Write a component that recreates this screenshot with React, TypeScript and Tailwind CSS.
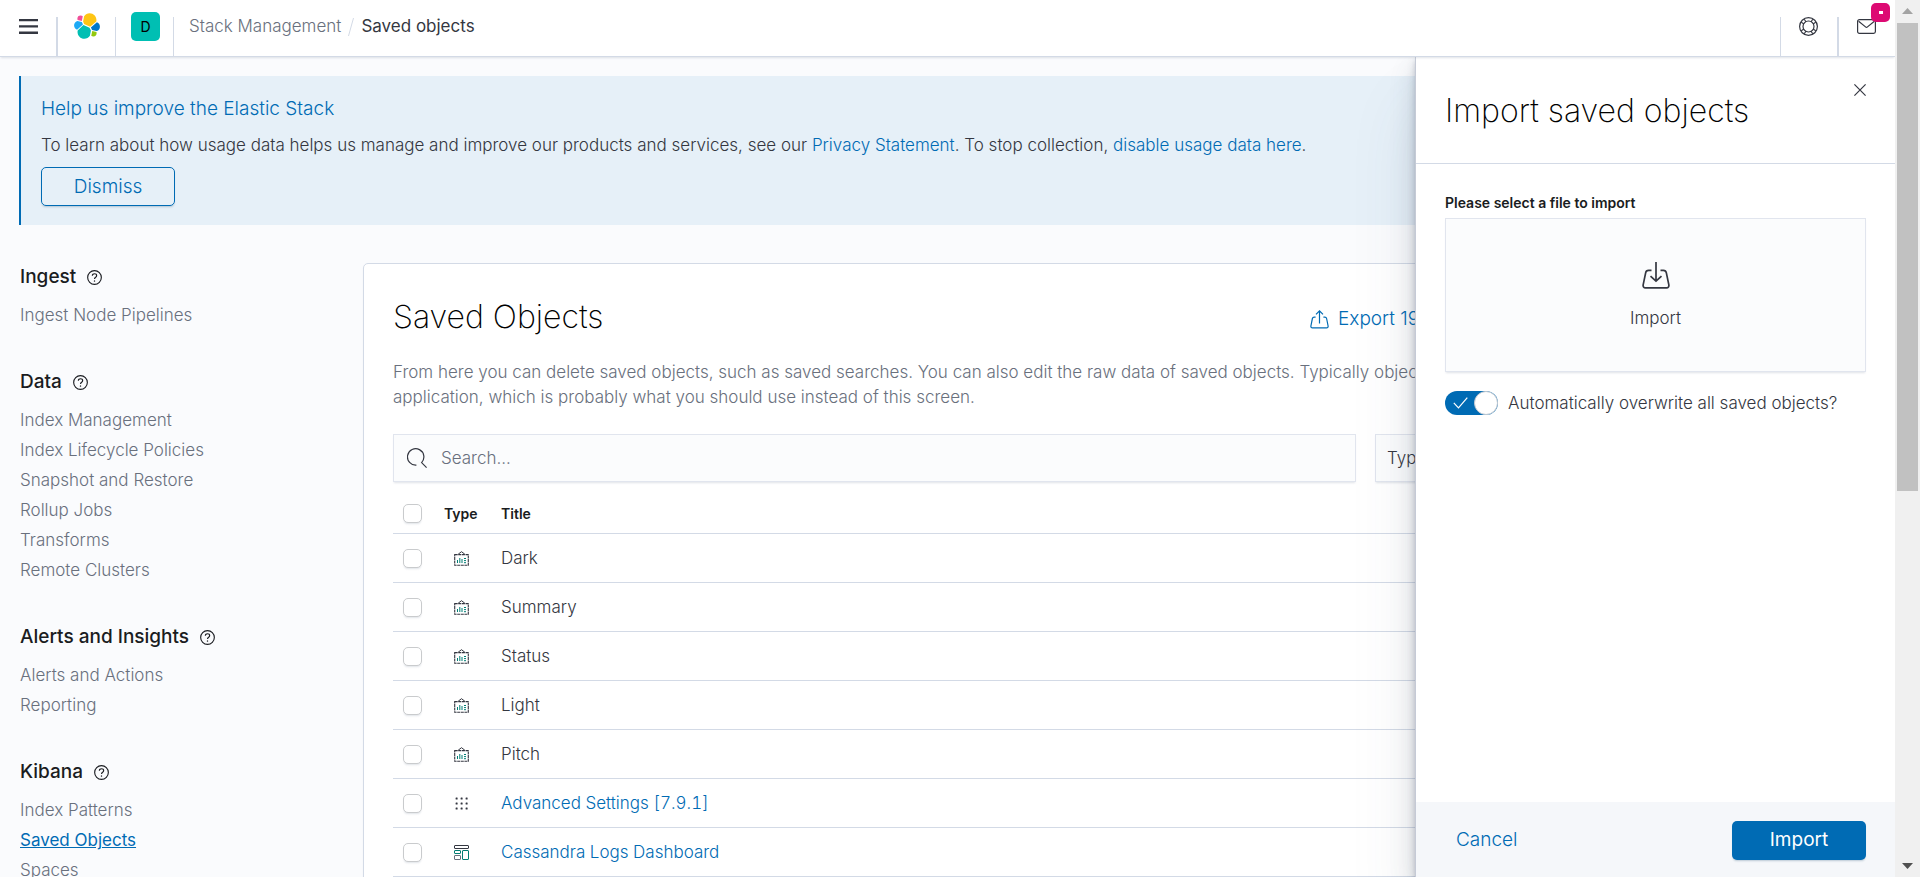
import React, { useState } from "react";

const dark = "#343741";

function ElasticLogo() {
  return (
    <svg viewBox="0 0 32 32" className="size-7" aria-hidden="true">
      <path fill="#FEC514" d="M12.58 13.787l7.002 3.211 7.066-6.213a7.849 7.849 0 00.152-1.557c0-4.287-3.464-7.775-7.722-7.775a7.7 7.7 0 00-6.368 3.39l-1.175 6.132 1.195 2.812z" />
      <path fill="#00BFB3" d="M5.333 21.228A8.013 8.013 0 005.18 22.8c0 4.301 3.473 7.8 7.741 7.8a7.72 7.72 0 006.4-3.408l1.165-6.106-1.556-2.996-7.03-3.223-6.567 6.361z" />
      <path fill="#F04E98" d="M5.288 9.067l4.8 1.141 1.052-5.484a3.814 3.814 0 00-2.309-.778 3.84 3.84 0 00-3.824 3.85c0 .442.077.874.281 1.271z" />
      <path fill="#1BA9F5" d="M4.872 10.214C2.727 10.928 1.229 13.004 1.229 15.285c0 2.222 1.365 4.203 3.414 4.988l6.734-6.128-1.236-2.66-5.269-1.271z" />
      <path fill="#93C90E" d="M20.873 27.191a3.804 3.804 0 002.3.779 3.84 3.84 0 003.823-3.85c0-.452-.077-.884-.22-1.286l-4.796-1.13-1.107 5.487z" />
      <path fill="#0077CC" d="M21.848 20.563l5.28 1.243c2.145-.714 3.643-2.79 3.643-5.071a5.354 5.354 0 00-3.422-4.991l-6.905 6.088 1.404 2.731z" />
    </svg>
  );
}

function LifebuoyIcon() {
  return (
    <svg viewBox="0 0 19 19" className="size-[19px]" fill="none" stroke={dark} aria-hidden="true">
      <circle cx="9.5" cy="9.5" r="8.900" strokeWidth="1.200" />
      <circle cx="9.5" cy="9.5" r="5.500" strokeWidth="1.200" />
      <path d="M5.300 2.200l1.700 2.800M2.200 5.300l2.800 1.700M13.700 2.200l-1.700 2.800M16.800 5.300l-2.800 1.700M5.300 16.800l1.700-2.800M2.200 13.700l2.800-1.700M13.700 16.800l-1.700-2.800M16.800 13.700l-2.800-1.700" strokeWidth="1.200" />
    </svg>
  );
}

function MailIcon() {
  return (
    <svg viewBox="0 0 19 15" className="h-[15px] w-[19px]" fill="none" stroke={dark} aria-hidden="true">
      <rect x="0.6" y="0.6" width="17.8" height="13.8" rx="1.8" strokeWidth="1.2" />
      <path d="M1.600 2.200l6.900 5.700a1.500 1.500 0 002 0l6.900-5.700" strokeWidth="1.2" />
    </svg>
  );
}

function HelpIcon() {
  return (
    <svg viewBox="0 0 16 16" className="size-[15px]" fill="none" stroke="#1a1c21" aria-hidden="true">
      <circle cx="8" cy="8" r="7.3" strokeWidth="1.2" />
      <path d="M5.7 6.2c0-1.4 1-2.2 2.3-2.2s2.3.8 2.3 2c0 1.7-2.3 1.7-2.3 3.6" strokeWidth="1.2" />
      <circle cx="8" cy="11.8" r="0.5" fill="#1a1c21" strokeWidth="0.6" />
    </svg>
  );
}

function SearchIcon() {
  return (
    <svg viewBox="0 0 20 20" className="size-5" fill="none" stroke={dark} strokeWidth="1.2" aria-hidden="true">
      <path d="M9.4 17.1A8.2 8.2 0 1 1 14.6 14.6L19.6 19.6" />
    </svg>
  );
}

function ExportIcon() {
  return (
    <svg viewBox="0 0 19 19" className="size-[19px]" fill="none" stroke="#006bb4" strokeWidth="1.2" aria-hidden="true">
      <path d="M5.6 7.1H4.2c-.9 0-1.6.5-1.8 1.4L.9 16c-.2 1.1.5 1.9 1.5 1.9h14.2c1 0 1.7-.8 1.5-1.9l-1.5-7.5c-.2-.9-.9-1.4-1.8-1.4h-1.4" />
      <path d="M9.5 13.5V.9M6 4.4L9.5.9 13 4.4" />
    </svg>
  );
}

function ImportIcon() {
  return (
    <svg viewBox="0 0 28 27" className="h-[27px] w-7" fill="none" stroke={dark} strokeWidth="1.7" aria-hidden="true">
      <path d="M9.500 8.300H6.600c-1.600 0-2.700.8-2.900 2.300L1.200 22.600c-.4 1.900.6 3.200 2.300 3.200h21c1.700 0 2.700-1.300 2.300-3.200l-2.500-12c-.3-1.500-1.300-2.300-2.900-2.300h-2.900" />
      <path d="M14 0v19.300M8.500 14.200l5.500 5 5.500-5" />
    </svg>
  );
}

function CanvasIcon() {
  return (
    <svg viewBox="0 0 15 15" className="mx-auto size-[15px]" fill="none" aria-hidden="true">
      <path d="M.7 3.600h13.600v10.700H.7z" stroke="#343741" strokeWidth="1.100" strokeDasharray="3 .6" />
      <path d="M4.200 3.200L7.500.700l3.300 2.500" stroke="#343741" />
      <path d="M3.500 12V9M5.800 12V7M8 12V8M10 7.500h2M10 9.600h2M10 11.700h2" stroke="#017d73" />
    </svg>
  );
}

function GridIcon() {
  return (
    <svg viewBox="0 0 15 15" className="mx-auto size-[15px]" fill="#343741" aria-hidden="true">
      {[2, 7, 12].map((y) => [2, 7, 12].map((x) => <rect key={`${x}-${y}`} x={x - 0.4} y={y - 0.4} width="2" height="2" rx="0.500" />))}
    </svg>
  );
}

function DashboardIcon() {
  return (
    <svg viewBox="0 0 15 15" className="mx-auto size-[15px]" fill="none" aria-hidden="true">
      <rect x="0.500" y="0.500" width="14" height="3" rx="0.500" stroke="#343741" />
      <rect x="8.500" y="5.500" width="6" height="9" rx="0.500" stroke="#017d73" />
      <rect x="0.500" y="5.500" width="6" height="3" rx="0.500" stroke="#017d73" />
      <rect x="0.500" y="10.500" width="6" height="4" rx="0.500" stroke="#69707d" />
    </svg>
  );
}

const nav = [
  { title: "Ingest", items: ["Ingest Node Pipelines"] },
  {
    title: "Data",
    items: ["Index Management", "Index Lifecycle Policies", "Snapshot and Restore", "Rollup Jobs", "Transforms", "Remote Clusters"],
  },
  { title: "Alerts and Insights", items: ["Alerts and Actions", "Reporting"] },
  { title: "Kibana", items: ["Index Patterns", "Saved Objects", "Spaces"] },
];

const rows = [
  { title: "Dark", kind: "canvas" },
  { title: "Summary", kind: "canvas" },
  { title: "Status", kind: "canvas" },
  { title: "Light", kind: "canvas" },
  { title: "Pitch", kind: "canvas" },
  { title: "Advanced Settings [7.9.1]", kind: "config", link: true },
  { title: "Cassandra Logs Dashboard", kind: "dashboard", link: true },
];

function TypeIcon({ kind }: { kind: string }) {
  if (kind === "canvas") return <CanvasIcon />;
  if (kind === "config") return <GridIcon />;
  return <DashboardIcon />;
}

function RowCheckbox({ label }: { label: string }) {
  return (
    <input
      type="checkbox"
      aria-label={label}
      className="block size-[19px] appearance-none rounded-[5px] border border-[#c9cbcd] bg-white shadow-[0_2px_2px_-1px_rgba(152,162,179,0.3)] checked:bg-[#006bb4]"
    />
  );
}

function Header() {
  return (
    <header className="relative z-20 flex h-[57px] shrink-0 items-stretch border-b border-[#d3dae6] bg-white shadow-[0_2px_2px_-1px_rgba(152,162,179,0.3)]">
      <div className="flex w-14 items-start justify-center pt-[19px]">
        <button type="button" aria-label="Toggle primary navigation">
          <svg viewBox="0 0 19 15" className="h-[15px] w-[19px]" fill={dark} aria-hidden="true">
            <path d="M0 0h19v2.300H0zM0 6.300h19v2.300H0zM0 12.600h19V15H0z" />
          </svg>
        </button>
      </div>
      <div className="mt-[17px] w-0.5 bg-[#d3dae6]" />
      <div className="flex w-[57px] items-start justify-center pt-3">
        <a href="#home" aria-label="Elastic home"><ElasticLogo /></a>
      </div>
      <div className="mt-[17px] w-px bg-[#d3dae6]" />
      <div className="flex w-[57px] items-start pt-3 pl-[15px]">
        <button type="button" aria-label="Default space" className="size-[29px] rounded-[5px] bg-[#00bfb3] text-sm leading-[29px] font-normal text-black">
          D
        </button>
      </div>
      <div className="mt-[17px] w-px bg-[#d3dae6]" />
      <nav aria-label="Breadcrumbs" className="flex h-[54px] items-center pl-[15px] text-[17px]">
        <a href="#management" className="text-[#69707d]">Stack Management</a>
        <svg viewBox="0 0 6 18" className="mx-[7px] h-[18px] w-1.5" stroke="#d3dae6" aria-hidden="true">
          <path d="M5.500 0L.5 18" />
        </svg>
        <span className="font-normal text-[#343741]">Saved objects</span>
      </nav>
      <div className="flex-1" />
      <div className="mt-[17px] w-px bg-[#d3dae6]" />
      <div className="flex w-14 items-start pt-[17px] pl-[18px]">
        <button type="button" aria-label="Help menu"><LifebuoyIcon /></button>
      </div>
      <div className="mt-[17px] w-0.5 bg-[#d3dae6]" />
      <div className="flex w-14 items-start pt-[19px] pl-[18px]">
        <button type="button" aria-label="Newsfeed" className="relative">
          <MailIcon />
          <span className="absolute -top-4 left-3.5 flex size-[19px] items-center justify-center rounded-[5px] bg-[#dd0a73]">
            <span className="h-[3px] w-1 bg-white" />
          </span>
        </button>
      </div>
    </header>
  );
}

function Callout() {
  return (
    <section className="border-l-2 border-[#006bb4] bg-[#e6f0f8] px-5 pt-[19px] pb-[19px]">
      <h2 className="text-[19px] leading-[27px] text-[#006bb4]">Help us improve the Elastic Stack</h2>
      <p className="mt-[10px] text-[17px] leading-[26px] text-[#343741]">
        To learn about how usage data helps us manage and improve our products and services, see our{" "}
        <a href="#privacy" className="text-[#006bb4]">Privacy Statement</a>. To stop collection,{" "}
        <a href="#usage" className="text-[#006bb4]">disable usage data here</a>.
      </p>
      <button
        type="button"
        className="mt-[9px] block h-[39px] w-[134px] rounded-[5px] border border-[#006bb4] text-[19px] leading-none text-[#006bb4] shadow-[0_2px_2px_-1px_rgba(54,97,126,0.3)]"
      >
        Dismiss
      </button>
    </section>
  );
}

function SideNav() {
  return (
    <nav aria-label="Stack Management" className="flex w-[344px] shrink-0 flex-col gap-[38px] pl-px">
      {nav.map((group) => (
        <div key={group.title}>
          <h3 className="flex h-7 items-center gap-[11px] text-[19px] font-medium text-[#1a1c21]">
            {group.title}
            <HelpIcon />
          </h3>
          <ul className="mt-[9px]">
            {group.items.map((item) => (
              <li key={item} className="h-[30px] text-[17px] leading-[30px]">
                <a
                  href="#section"
                  className={item === "Saved Objects" ? "font-normal text-[#006bb4] underline" : "text-[#69707d]"}
                >
                  {item}
                </a>
              </li>
            ))}
          </ul>
        </div>
      ))}
    </nav>
  );
}

function ObjectsPanel() {
  return (
    <main className="min-w-0 flex-1 rounded-[5px] border border-[#d3dae6] bg-white px-[29px] pt-[29px] pb-[29px] shadow-[0_2px_2px_-1px_rgba(152,162,179,0.3)]">
      <div className="flex items-center justify-between">
        <h1 className="text-[32px] leading-[48px] font-extralight text-black">Saved Objects</h1>
        <div className="flex w-[536px] items-center justify-between pt-1 text-[19px] text-[#006bb4]">
          <button type="button" className="flex items-center gap-[9px]"><ExportIcon />Export 199 objects</button>
          <button type="button">Import</button>
          <button type="button">Refresh</button>
        </div>
      </div>
      <p className="mt-[19px] text-[17px] leading-[25px] text-[#69707d]">
        From here you can delete saved objects, such as saved searches. You can also edit the raw data of saved objects. Typically objects are only modified via their associated
        <br />
        application, which is probably what you should use instead of this screen.
      </p>
      <div className="mt-6 flex gap-[19px]">
        <label className="flex h-12 min-w-0 flex-1 items-center gap-[14px] border border-[#e1e5ee] bg-[#fbfcfd] pl-[13px] shadow-[0_2px_2px_-1px_rgba(152,162,179,0.3)]">
          <SearchIcon />
          <input
            type="search"
            aria-label="Search saved objects"
            placeholder="Search..."
            className="min-w-0 flex-1 bg-transparent pt-0.5 text-[17px] text-[#343741] outline-none placeholder:text-[#69707d]"
          />
        </label>
        <div className="flex w-[471px] gap-[19px]">
          <button type="button" className="h-12 w-40 border border-[#e1e5ee] bg-[#fbfcfd] px-[11px] pt-0.5 text-left text-[17px] text-[#343741] shadow-[0_2px_2px_-1px_rgba(152,162,179,0.3)]">
            Type
          </button>
          <button type="button" className="h-12 flex-1 rounded-[5px] border border-[#d3dae6] text-[17px] text-[#69707d]">Delete</button>
          <button type="button" className="h-12 flex-1 rounded-[5px] border border-[#d3dae6] text-[17px] text-[#69707d]">Export</button>
        </div>
      </div>
      <table className="mt-[11px] w-full table-fixed border-collapse text-left">
        <thead>
          <tr className="h-10 border-b border-[#d3dae6] text-sm text-[#1a1c21]">
            <th className="w-[41px] pt-0.5 pl-[10px]"><RowCheckbox label="Select all rows" /></th>
            <th className="w-[57px] pt-0.5 pl-[10px] font-semibold">Type</th>
            <th className="pt-0.5 pl-[10px] font-semibold">Title</th>
          </tr>
        </thead>
        <tbody>
          {rows.map((row) => (
            <tr key={row.title} className="h-[49px] border-b border-[#d3dae6] text-[17px] text-[#343741]">
              <td className="pt-0.5 pl-[10px]"><RowCheckbox label={`Select ${row.title}`} /></td>
              <td className="pt-0.5 pr-[3px]"><TypeIcon kind={row.kind} /></td>
              <td className="pt-0.5 pl-[10px] tabular-nums">
                {row.link ? <a href="#object" className="text-[#006bb4]">{row.title}</a> : row.title}
              </td>
            </tr>
          ))}
        </tbody>
      </table>
    </main>
  );
}

function ImportFlyout() {
  const [overwrite, setOverwrite] = useState(true);
  return (
    <aside
      aria-labelledby="flyout-title"
      className="absolute top-[57px] right-0 bottom-0 z-10 flex w-[480px] flex-col border-l border-[#c5cad6] bg-white shadow-[0_2px_4px_-1px_rgba(65,78,101,0.2),0_4px_8px_0_rgba(65,78,101,0.2),0_12px_24px_0_rgba(65,78,101,0.2),0_48px_64px_0_rgba(65,78,101,0.1)]"
    >
      <div className="flex h-[107px] items-start justify-between border-b border-[#d3dae6] pt-[26px] pr-7 pl-[29px]">
        <h2 id="flyout-title" className="text-[32px] leading-[56px] font-extralight text-black">Import saved objects</h2>
        <button type="button" aria-label="Close" className="p-px">
          <svg viewBox="0 0 12 12" className="size-3" stroke={dark} strokeWidth="1.200" aria-hidden="true">
            <path d="M.4.400l11.200 11.200M11.600.400L.4 11.600" />
          </svg>
        </button>
      </div>
      <div className="flex-1 px-[29px] pt-[29px]">
        <label htmlFor="import-file" className="block text-sm leading-5 font-semibold text-[#1a1c21]">
          Please select a file to import
        </label>
        <label
          htmlFor="import-file"
          className="mt-[5px] flex h-[154px] flex-col items-center justify-center gap-[19px] border border-[#e1e5ee] bg-[#fbfcfd] text-[17px] leading-5 text-[#343741] shadow-[0_2px_2px_-1px_rgba(152,162,179,0.3)]"
        >
          <ImportIcon />
          Import
          <input id="import-file" type="file" className="sr-only" />
        </label>
        <label className="mt-[19px] flex items-center gap-[10px] text-[17px] leading-6 text-[#343741]">
          <span className="relative flex h-6 w-[53px] items-center rounded-full bg-[#006bb4]">
            <input
              type="checkbox"
              role="switch"
              checked={overwrite}
              onChange={(e) => setOverwrite(e.target.checked)}
              className="absolute inset-0 appearance-none"
            />
            <svg viewBox="0 0 15 12" className="ml-2 h-3 w-[15px]" fill="none" stroke="#fff" strokeWidth="1.200" aria-hidden="true">
              <path d="M.8 5.800l4.700 5L14.300.600" />
            </svg>
            <span className="ml-auto size-6 rounded-full border border-[#c2c9d1] bg-white" />
          </span>
          Automatically overwrite all saved objects?
        </label>
      </div>
      <footer className="flex h-[75px] items-center justify-between bg-[#f5f7fa] pt-0.5 pr-[29px] pl-10 text-[19px]">
        <button type="button" className="text-[#006bb4]">Cancel</button>
        <button type="button" className="h-[39px] w-[134px] rounded-[5px] bg-[#006bb4] font-normal text-white shadow-[0_2px_2px_-1px_rgba(54,97,126,0.3)]">
          Import
        </button>
      </footer>
    </aside>
  );
}

function ScrollTrack() {
  return (
    <div aria-hidden="true" className="flex w-[25px] shrink-0 flex-col items-center bg-[#f0f0f0]">
      <svg viewBox="0 0 25 23" className="h-[23px] w-[25px] shrink-0" fill="#a3a3a3"><path d="M7 14l5.500-6L18 14z" /></svg>
      <div className="h-[468px] w-[21px] bg-[#c1c1c1]" />
      <svg viewBox="0 0 25 23" className="mt-auto h-[23px] w-[25px] shrink-0" fill="#505050"><path d="M7 9l5.500 6L18 9z" /></svg>
    </div>
  );
}

export default function App() {
  return (
    <div className="flex h-screen overflow-hidden bg-[#fafbfd] font-['Inter',sans-serif] font-light">
      <div className="relative flex min-w-0 flex-1 flex-col overflow-hidden">
        <Header />
        <div className="min-h-0 flex-1 overflow-hidden px-[19px] pt-[19px]">
          <Callout />
          <div className="mt-[38px] flex items-start">
            <SideNav />
            <ObjectsPanel />
          </div>
        </div>
        <ImportFlyout />
      </div>
      <ScrollTrack />
    </div>
  );
}
